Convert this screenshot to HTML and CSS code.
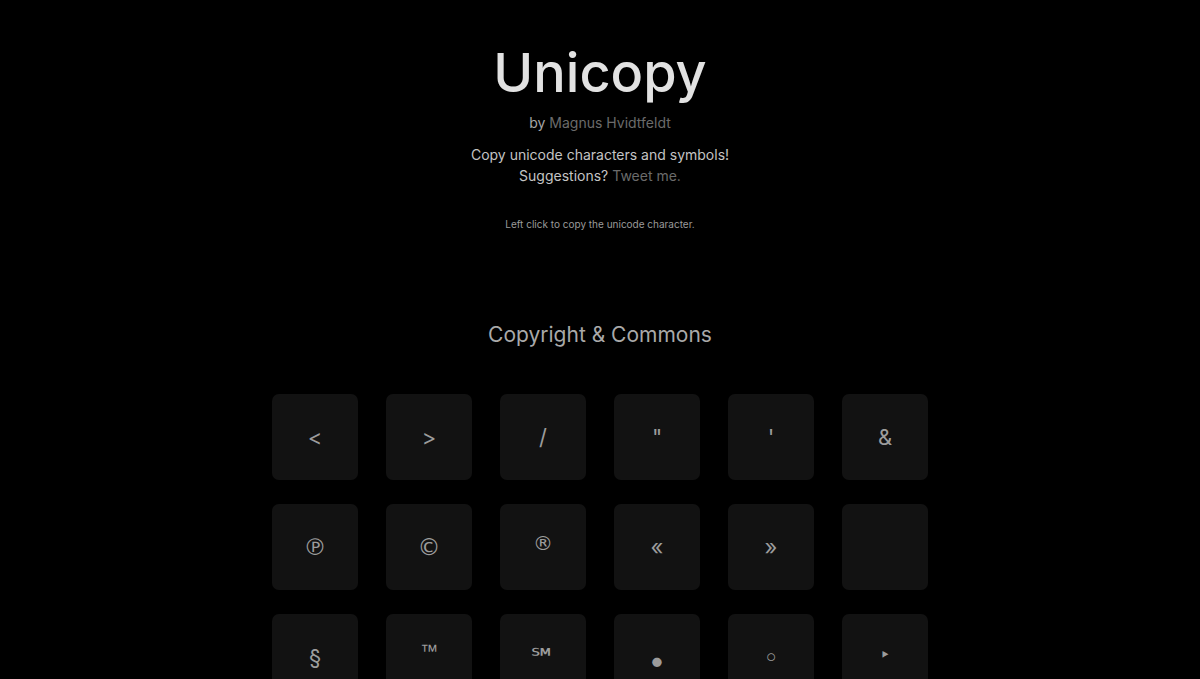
FILE: index.html
```html
<!DOCTYPE html>
<html lang="en">
<head>
<meta charset="utf-8">
<title>Unicopy</title>
<link rel="stylesheet" href="styles.css">
</head>
<body>
<header class="hero">
  <h1 class="title">Unicopy</h1>
  <p class="byline">by <a class="muted-link" href="#">Magnus Hvidtfeldt</a></p>
  <p class="tagline">Copy unicode characters and symbols!<br>Suggestions? <a class="muted-link" href="#">Tweet me.</a></p>
  <p class="hint">Left click to copy the unicode character.</p>
</header>
<main class="section">
  <h2 class="section-title">Copyright &amp; Commons</h2>
  <div class="grid">
    <button class="tile">&lt;</button>
    <button class="tile">&gt;</button>
    <button class="tile">/</button>
    <button class="tile">"</button>
    <button class="tile">'</button>
    <button class="tile">&amp;</button>
    <button class="tile tile--circled">℗</button>
    <button class="tile tile--circled">©</button>
    <button class="tile tile--reg">®</button>
    <button class="tile">«</button>
    <button class="tile">»</button>
    <button class="tile" aria-label="soft hyphen"></button>
    <button class="tile">§</button>
    <button class="tile tile--tm">™</button>
    <button class="tile tile--sm">℠</button>
    <button class="tile tile--dot">•</button>
    <button class="tile tile--ring">◦</button>
    <button class="tile tile--tri">‣</button>
  </div>
</main>
</body>
</html>
```
FILE: styles.css
```css
html, body {
  margin: 0;
  padding: 0;
  background: #000;
}
body {
  font-family: Inter, "Noto Sans", "Liberation Sans", sans-serif;
  color: #cfcfcf;
  text-align: center;
}
.hero {
  padding-top: 40px;
}
.title {
  margin: 0;
  font-size: 54px;
  font-weight: 500;
  line-height: 66px;
  color: #e2e2e2;
}
.byline {
  margin: 7px 0 0;
  font-size: 14px;
  line-height: 20px;
  color: #a6a6a6;
}
.muted-link {
  color: #6b6b6b;
  text-decoration: none;
}
.tagline {
  margin: 11px 0 0;
  font-size: 14px;
  line-height: 21px;
  color: #c4c4c4;
}
.hint {
  margin: 31px 0 0;
  font-size: 10px;
  line-height: 14px;
  color: #9a9a9a;
}
.section {
  padding-top: 89px;
}
.section-title {
  margin: 0;
  font-size: 21px;
  font-weight: 400;
  line-height: 30px;
  color: #a9a9a9;
}
.grid {
  display: grid;
  grid-template-columns: repeat(6, 86px);
  column-gap: 28px;
  row-gap: 24px;
  justify-content: center;
  margin-top: 44px;
}
.tile {
  width: 86px;
  height: 86px;
  border: 0;
  border-radius: 7px;
  background: #121212;
  color: #9c9c9c;
  font-family: Inter, "Noto Sans", "DejaVu Sans", sans-serif;
  font-size: 22px;
  line-height: 1;
  padding: 0;
  display: flex;
  align-items: center;
  justify-content: center;
  cursor: pointer;
}
.tile--circled {
  font-family: "DejaVu Sans", sans-serif;
  font-size: 23px;
}
.tile--reg {
  font-family: "DejaVu Sans", sans-serif;
  font-size: 20px;
  padding-bottom: 8px;
}
.tile--tm {
  font-family: "Liberation Sans", sans-serif;
  font-size: 18px;
  padding-bottom: 12px;
}
.tile--sm {
  font-family: "DejaVu Sans", sans-serif;
  font-size: 28px;
  padding-top: 4px;
}
.tile--dot {
  font-size: 30px;
  padding-top: 6px;
}
.tile--ring {
  font-family: "DejaVu Sans", sans-serif;
  font-size: 26px;
  padding-top: 2px;
}
.tile--tri {
  font-family: "DejaVu Sans", sans-serif;
  font-size: 18px;
  padding-bottom: 4px;
}
```
